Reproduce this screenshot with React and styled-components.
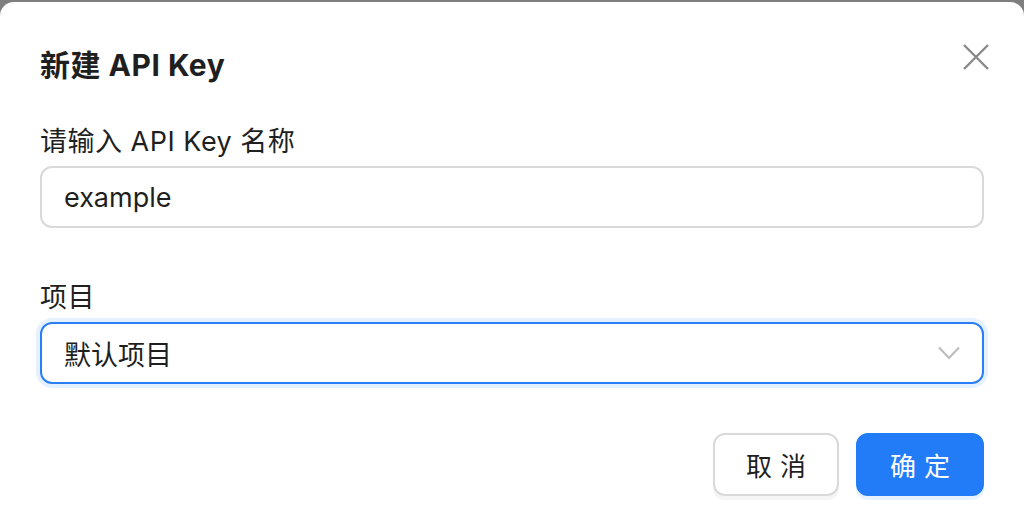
import React from "react";
import styled, { createGlobalStyle } from "styled-components";

const GlobalStyle = createGlobalStyle`
  html, body {
    margin: 0;
    padding: 0;
    background: #7f7f7f;
    font-family: Inter, "Noto Sans CJK SC", "Noto Sans", sans-serif;
  }
`;

const Dialog = styled.div`
  margin-top: 2px;
  min-height: 528px;
  box-sizing: border-box;
  background: #fff;
  border-radius: 14px 14px 0 0;
  padding: 45px 40px 0;
`;

const Header = styled.div`
  display: flex;
  align-items: center;
  justify-content: space-between;
  height: 36px;
  margin-bottom: 41px;
`;

const Title = styled.h2`
  margin: 0;
  font-size: 30px;
  line-height: 36px;
  font-weight: 700;
  letter-spacing: 0.5px;
  color: #1f1f1f;
`;

const CloseButton = styled.button`
  border: 0;
  background: none;
  padding: 0;
  margin: 0 -10px 16px 0;
  width: 36px;
  height: 36px;
  display: flex;
  align-items: center;
  justify-content: center;
  cursor: pointer;
`;

const Field = styled.div`
  display: flex;
  flex-direction: column;
  gap: 6px;
  margin-bottom: ${(p) => p.gap || 0}px;
`;

const Label = styled.label`
  font-size: 27px;
  line-height: 36px;
  letter-spacing: 0.5px;
  color: #1f1f1f;
`;

const Box = styled.div`
  height: 62px;
  box-sizing: border-box;
  border: 2px solid ${(p) => (p.focused ? "#2a7ef7" : "#d9d9d9")};
  box-shadow: ${(p) => (p.focused ? "0 0 0 4px #e6f1ff" : "none")};
  border-radius: 12px;
  padding: 0 22px;
  display: flex;
  align-items: center;
  justify-content: space-between;
  font-size: 27px;
  color: #1f1f1f;
`;

const Footer = styled.div`
  display: flex;
  justify-content: flex-end;
  gap: 17px;
  margin-top: 49px;
`;

const Button = styled.button`
  height: 63px;
  width: ${(p) => (p.primary ? 128 : 126)}px;
  box-sizing: border-box;
  border-radius: 12px;
  border: 2px solid ${(p) => (p.primary ? "#227cf7" : "#d9d9d9")};
  background: ${(p) => (p.primary ? "#227cf7" : "#fff")};
  color: ${(p) => (p.primary ? "#fff" : "#1f1f1f")};
  font-family: inherit;
  font-size: 26px;
  letter-spacing: 8px;
  padding: 0 0 0 8px;
  box-shadow: 0 4px 0 ${(p) => (p.primary ? "#e8f2ff" : "#f5f5f5")};
  cursor: pointer;
`;

const App = () => (
  <>
    <GlobalStyle />
    <Dialog>
      <Header>
        <Title>新建 API Key</Title>
        <CloseButton aria-label="关闭">
          <svg width="26" height="26" viewBox="0 0 26 26">
            <path d="M1 1L25 25M25 1L1 25" stroke="#8a8a8a" strokeWidth="2.4" />
          </svg>
        </CloseButton>
      </Header>
      <Field gap={52}>
        <Label>请输入 API Key 名称</Label>
        <Box>example</Box>
      </Field>
      <Field>
        <Label>项目</Label>
        <Box focused>
          默认项目
          <svg width="22" height="14" viewBox="0 0 22 14">
            <path d="M1 1.5L11 12L21 1.5" fill="none" stroke="#bdbdbd" strokeWidth="2.2" />
          </svg>
        </Box>
      </Field>
      <Footer>
        <Button>取消</Button>
        <Button primary>确定</Button>
      </Footer>
    </Dialog>
  </>
);

export default App;
